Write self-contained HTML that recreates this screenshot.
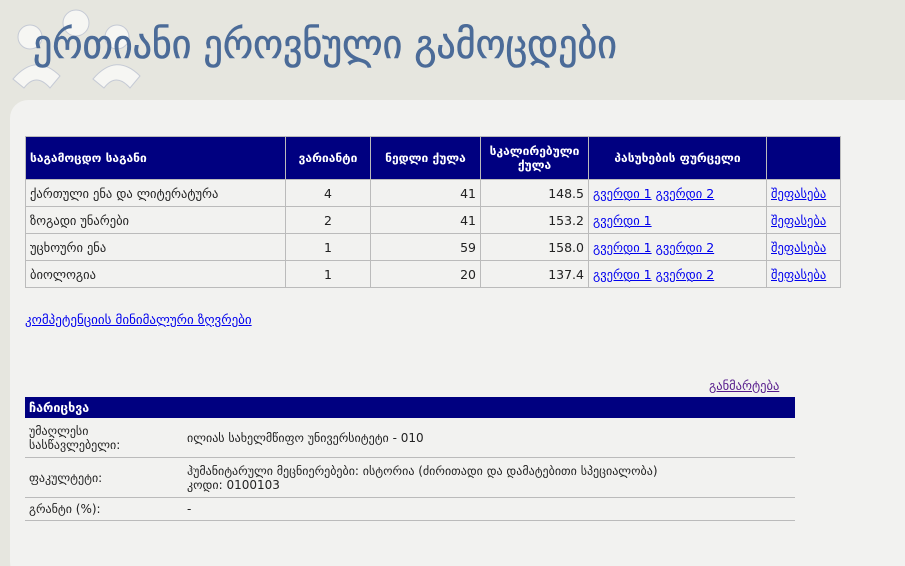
<!DOCTYPE html>
<html><head><meta charset="utf-8"><style>
html,body{margin:0;width:905px;height:566px;overflow:hidden}
body{background:#e6e6df;font-family:"DejaVu Sans","Liberation Sans",sans-serif;position:relative}
.title{position:absolute;left:33px;top:22px;font-size:40px;color:#4b6b98;letter-spacing:0;font-family:"DejaVu Sans",sans-serif;transform:scaleX(0.95);transform-origin:left;white-space:nowrap;-webkit-text-stroke:0.6px #4b6b98}
.panel{position:absolute;left:10px;top:100px;width:920px;height:480px;background:#f2f2f0;border-radius:18px}
table{border-collapse:collapse;position:absolute;font-size:12.5px;table-layout:fixed}
.t1{left:25px;top:136px;width:816px}
.t1 th{background:#000080;color:#fff;font-size:12px;font-weight:bold;border:1px solid #bbb;height:42px;padding:0 4px}
.t1 td{border:1px solid #bbb;height:26px;padding:0 4px;color:#222;white-space:nowrap;overflow:hidden}
a{color:#0000ee}
.r{text-align:right}.c{text-align:center}
.t2{left:25px;top:397px;width:770px}
.t2 th{background:#000080;color:#fff;text-align:left;height:21px;padding:0 4px;font-size:12.5px}
.t2 td{border-bottom:1px solid #bbb;padding:2px 4px;color:#222;font-size:12px;vertical-align:middle}
</style></head><body>
<svg style="position:absolute;left:0;top:0" width="150" height="95" viewBox="0 0 150 95">
<g fill="#f6f6f3" stroke="#c5cad5" stroke-width="1">
<circle cx="76" cy="23" r="13"/><circle cx="30" cy="37" r="12"/><circle cx="117" cy="37" r="12"/>
<path d="M13 79 Q36 52 60 76 L50 88 Q36 72 24 88 Z"/>
<path d="M93 79 Q116 52 140 76 L130 88 Q116 72 104 88 Z"/>
</g></svg>
<div class="title">ერთიანი ეროვნული გამოცდები</div>
<div class="panel"></div>
<table class="t1">
<colgroup><col style="width:260px"><col style="width:85px"><col style="width:110px"><col style="width:108px"><col style="width:178px"><col></colgroup>
<tr><th style="text-align:left">საგამოცდო საგანი</th><th>ვარიანტი</th><th>ნედლი ქულა</th><th>სკალირებული ქულა</th><th>პასუხების ფურცელი</th><th></th></tr>
<tr><td>ქართული ენა და ლიტერატურა</td><td class="c">4</td><td class="r">41</td><td class="r">148.5</td><td><a href="#">გვერდი 1</a> <a href="#">გვერდი 2</a></td><td><a href="#">შეფასება</a></td></tr>
<tr><td>ზოგადი უნარები</td><td class="c">2</td><td class="r">41</td><td class="r">153.2</td><td><a href="#">გვერდი 1</a></td><td><a href="#">შეფასება</a></td></tr>
<tr><td>უცხოური ენა</td><td class="c">1</td><td class="r">59</td><td class="r">158.0</td><td><a href="#">გვერდი 1</a> <a href="#">გვერდი 2</a></td><td><a href="#">შეფასება</a></td></tr>
<tr><td>ბიოლოგია</td><td class="c">1</td><td class="r">20</td><td class="r">137.4</td><td><a href="#">გვერდი 1</a> <a href="#">გვერდი 2</a></td><td><a href="#">შეფასება</a></td></tr>
</table>
<a href="#" style="position:absolute;left:25px;top:313px;font-size:13px">კომპეტენციის მინიმალური ზღვრები</a>
<a href="#" style="position:absolute;left:709px;top:378px;font-size:12.5px;color:#551a8b">განმარტება</a>
<table class="t2">
<colgroup><col style="width:158px"><col></colgroup>
<tr><th colspan="2">ჩარიცხვა</th></tr>
<tr><td style="height:35px">უმაღლესი<br>სასწავლებელი:</td><td>ილიას სახელმწიფო უნივერსიტეტი - 010</td></tr>
<tr><td style="height:35px">ფაკულტეტი:</td><td>ჰუმანიტარული მეცნიერებები: ისტორია (ძირითადი და დამატებითი სპეციალობა)<br>კოდი: 0100103</td></tr>
<tr><td style="height:18px">გრანტი (%):</td><td>-</td></tr>
</table>
</body></html>
